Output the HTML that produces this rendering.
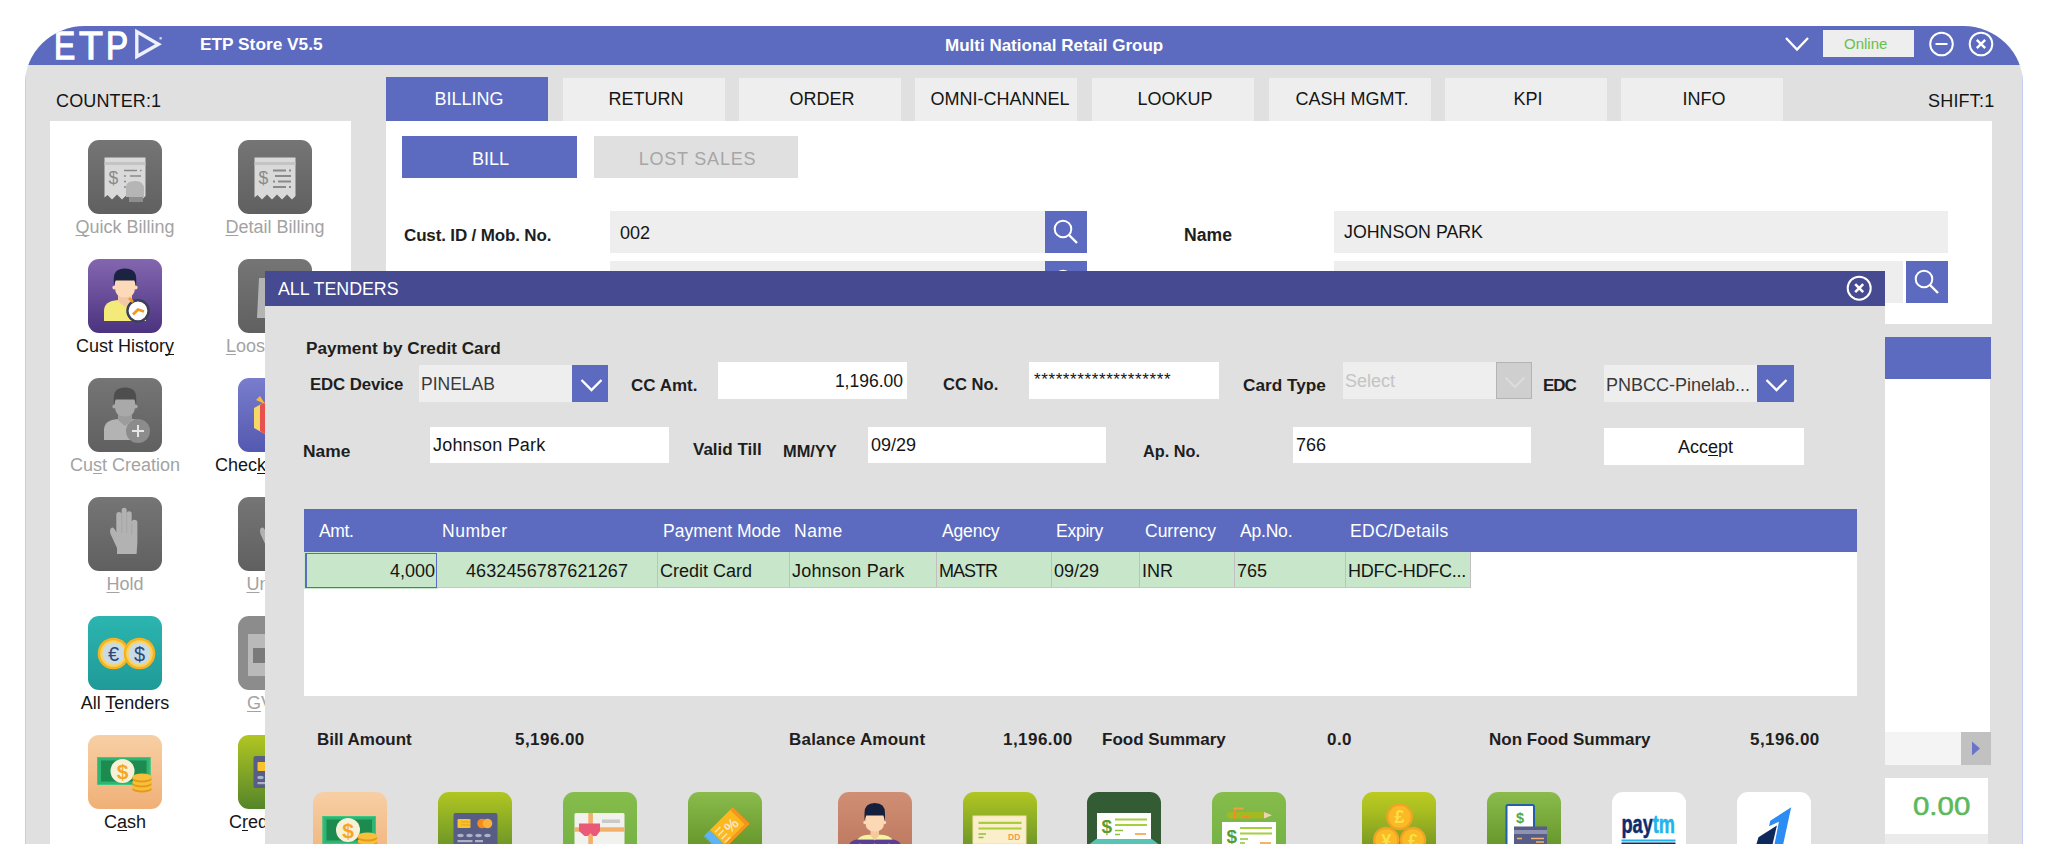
<!DOCTYPE html>
<html lang="en">
<head>
<meta charset="utf-8">
<title>ETP Store V5.5</title>
<style>
*{box-sizing:border-box;margin:0;padding:0}
html,body{width:2048px;height:844px;overflow:hidden;background:#fff}
body{font-family:"Liberation Sans",Arial,sans-serif;color:#151515;position:relative}
.abs{position:absolute}
#win{position:absolute;left:0;top:0;width:2048px;height:844px;background:#e0e0e0;clip-path:inset(26px 25px 0 25px round 60px 60px 0 0 / 58px 58px 0 0)}
#win>*{position:absolute}
#tbar{left:0;top:26px;width:2048px;height:39px;background:#5c6bc0}
.t{position:absolute;white-space:nowrap;line-height:1}
.b{font-weight:bold;color:#1e1e1e}
.tab{position:absolute;top:78px;height:43px;width:162px;background:#eeeeee;font-size:18px;text-align:center;line-height:43px;padding-left:4px}
.tab.act{background:#5c6bc0;color:#fff;top:77px;height:44px;line-height:45px}
.inp{position:absolute;background:#eeeeee;font-size:16px;line-height:1;white-space:nowrap}
.sbtn{position:absolute;background:#5c6bc0}
.ico{position:absolute;width:74px;height:74px;border-radius:11px;overflow:hidden}
.lbl{position:absolute;font-size:18px;line-height:1;white-space:nowrap;text-align:center;width:160px}
.lbl.dis{color:#a3a3a3}
u{text-decoration:underline;text-underline-offset:2px;text-decoration-skip-ink:none}
#dlg{left:265px;top:271px;width:1620px;height:600px;background:#e0e0e0;overflow:hidden}
#dlg>*{position:absolute}
.w{background:#fff}
.th{position:absolute;top:0;font-size:17.5px;color:#fff;line-height:44px;white-space:nowrap}
.td{position:absolute;top:43px;height:36px;background:#c8e6c9;border-right:1px solid #c3bec3;border-bottom:1px solid #c6c6c6;font-size:18px;line-height:38px;white-space:nowrap;padding-left:4px}
</style>
</head>
<body>
<div id="win">
  <div id="tbar"></div>
  <div class="abs" style="left:25px;top:26px;width:1px;height:818px;background:#c3cdf3"></div>
  <div class="abs" style="left:2022px;top:26px;width:1px;height:818px;background:#c3cdf3"></div>
  <svg class="abs" style="left:50px;top:24px" width="120" height="40" viewBox="0 0 120 40">
    <g font-family="Liberation Sans, Arial, sans-serif" font-size="39.5" fill="#fff" stroke="#fff" stroke-width="1.3">
      <text transform="translate(3.9,34.5) scale(0.805,1)">E</text>
      <text transform="translate(29.1,34.5) scale(0.99,1)">T</text>
      <text transform="translate(55.9,34.5) scale(0.84,1)">P</text>
    </g>
    <path d="M86.8 7.6 L108.5 20.2 L86.8 32.6 Z" fill="none" stroke="#eef0fb" stroke-width="3.4" stroke-linejoin="miter"/>
    <rect x="109.5" y="13.2" width="2.2" height="2.2" fill="#dfe3f6"/>
  </svg>
  <div class="t b" id="ttl1" style="left:200px;top:36px;font-size:17.3px;color:#fff">ETP Store V5.5</div>
  <div class="t b" id="ttl2" style="left:945px;top:37px;font-size:17px;color:#fff">Multi National Retail Group</div>
  <svg class="abs" style="left:1780px;top:30px" width="34" height="28" viewBox="0 0 34 28"><path d="M6 8 L17 19.5 L28 8" fill="none" stroke="#fff" stroke-width="2.4"/></svg>
  <div class="abs" style="left:1823px;top:30px;width:91px;height:27px;background:#eeeeee"></div>
  <div class="t" id="onl" style="left:1844px;top:36px;font-size:15px;color:#6bbf4b">Online</div>
  <svg class="abs" style="left:1926px;top:29px" width="72" height="30" viewBox="0 0 72 30">
    <circle cx="15.5" cy="15" r="11.3" fill="none" stroke="#fff" stroke-width="2"/>
    <path d="M9.5 15 H21.5" stroke="#fff" stroke-width="2"/>
    <circle cx="55" cy="15" r="11.3" fill="none" stroke="#fff" stroke-width="2"/>
    <path d="M50.8 10.8 L59.2 19.2 M59.2 10.8 L50.8 19.2" stroke="#fff" stroke-width="2.4"/>
  </svg>
  <div class="t" id="cnt" style="left:56px;top:91.5px;font-size:18px;letter-spacing:0.13px">COUNTER:1</div>
  <div class="t" id="shf" style="left:1928px;top:91.5px;font-size:18px;letter-spacing:0.2px">SHIFT:1</div>
  <div class="tab act" style="left:386px">BILLING</div>
  <div class="tab" style="left:563px">RETURN</div>
  <div class="tab" style="left:739px">ORDER</div>
  <div class="tab" style="left:915px;padding-left:8px">OMNI-CHANNEL</div>
  <div class="tab" style="left:1092px">LOOKUP</div>
  <div class="tab" style="left:1269px">CASH MGMT.</div>
  <div class="tab" style="left:1445px">KPI</div>
  <div class="tab" style="left:1621px">INFO</div>
  <!-- main panel -->
  <div class="abs w" style="left:386px;top:121px;width:1606px;height:203px"></div>
  <div class="abs" style="left:402px;top:136px;width:175px;height:42px;background:#5c6bc0;color:#fff;font-size:18px;text-align:center;line-height:46px;padding-left:2px">BILL</div>
  <div class="abs" style="left:594px;top:136px;width:204px;height:42px;background:#e0e0e0;color:#a6a6a6;font-size:18px;text-align:center;line-height:46px;letter-spacing:0.8px;padding-left:3px">LOST SALES</div>
  <div class="t b" style="left:404px;top:227px;font-size:17px;letter-spacing:-0.15px">Cust. ID / Mob. No.</div>
  <div class="inp" style="left:610px;top:211px;width:435px;height:42px;padding:13px 0 0 10px;font-size:18px">002</div>
  <div class="sbtn" style="left:1045px;top:211px;width:42px;height:42px"><svg width="42" height="42" viewBox="0 0 42 42"><circle cx="18" cy="18" r="8.300" fill="none" stroke="#fff" stroke-width="2"/><path d="M24 24 L32 32" stroke="#fff" stroke-width="2.400"/></svg></div>
  <div class="inp" style="left:610px;top:261px;width:435px;height:42px"></div>
  <div class="sbtn" style="left:1045px;top:261px;width:42px;height:42px"><svg width="42" height="42" viewBox="0 0 42 42"><circle cx="18" cy="18" r="8.300" fill="none" stroke="#fff" stroke-width="2"/><path d="M24 24 L32 32" stroke="#fff" stroke-width="2.400"/></svg></div>
  <div class="t b" style="left:1184px;top:227px;font-size:17.6px">Name</div>
  <div class="inp" style="left:1334px;top:211px;width:614px;height:42px;padding:13px 0 0 10px;font-size:17.8px">JOHNSON PARK</div>
  <div class="inp" style="left:1334px;top:261px;width:569px;height:42px"></div>
  <div class="sbtn" style="left:1906px;top:261px;width:42px;height:42px"><svg width="42" height="42" viewBox="0 0 42 42"><circle cx="18" cy="18" r="8.300" fill="none" stroke="#fff" stroke-width="2"/><path d="M24 24 L32 32" stroke="#fff" stroke-width="2.400"/></svg></div>
  <!-- right column -->
  <div class="abs" style="left:1885px;top:337px;width:106px;height:42px;background:#5c6bc0"></div>
  <div class="abs w" style="left:1885px;top:379px;width:105px;height:353px"></div>
  <div class="abs" style="left:1885px;top:732px;width:76px;height:33px;background:#f4f4f4"></div>
  <div class="abs" style="left:1961px;top:732px;width:30px;height:33px;background:#c1c1c1"></div>
  <svg class="abs" style="left:1961px;top:732px" width="30" height="33"><path d="M11 9.5 L19 16.5 L11 23.5 Z" fill="#6a74c9"/></svg>
  <div class="abs w" style="left:1885px;top:778px;width:103px;height:56px"></div>
  <div class="t" id="zero" style="left:1912.5px;top:792.7px;font-size:26.5px;color:#5cb85c;-webkit-text-stroke:0.55px #5cb85c;transform:scaleX(1.11);transform-origin:0 0">0.00</div>
  <div class="abs" style="left:1885px;top:834px;width:103px;height:20px;background:#ebebeb"></div>
  <!-- sidebar -->
  <svg width="0" height="0" style="position:absolute">
    <defs>
      <linearGradient id="gGray" x1="0" y1="0" x2="0" y2="1"><stop offset="0" stop-color="#757575"/><stop offset="1" stop-color="#606060"/></linearGradient>
      <linearGradient id="gPurple" x1="0" y1="0" x2="0" y2="1"><stop offset="0" stop-color="#8466b0"/><stop offset="1" stop-color="#4b337f"/></linearGradient>
      <linearGradient id="gTeal" x1="0" y1="0" x2="0" y2="1"><stop offset="0" stop-color="#2cb5b0"/><stop offset="1" stop-color="#1f9a98"/></linearGradient>
      <linearGradient id="gPeach" x1="0" y1="0" x2="0" y2="1"><stop offset="0" stop-color="#f7cfa4"/><stop offset="1" stop-color="#f0b077"/></linearGradient>
      <linearGradient id="gOlive" x1="0" y1="0" x2="0" y2="1"><stop offset="0" stop-color="#b1c621"/><stop offset="1" stop-color="#55852a"/></linearGradient>
      <linearGradient id="gGreen" x1="0" y1="0" x2="0" y2="1"><stop offset="0" stop-color="#86bd4c"/><stop offset="1" stop-color="#6fae42"/></linearGradient>
      <linearGradient id="gGreen2" x1="0" y1="0" x2="0" y2="1"><stop offset="0" stop-color="#8abb4c"/><stop offset="1" stop-color="#5a8a20"/></linearGradient>
      <linearGradient id="gBrown" x1="0" y1="0" x2="0" y2="1"><stop offset="0" stop-color="#d08f74"/><stop offset="1" stop-color="#b8735a"/></linearGradient>
      <linearGradient id="gBlueP" x1="0" y1="0" x2="0" y2="1"><stop offset="0" stop-color="#7a7dcc"/><stop offset="1" stop-color="#5459b0"/></linearGradient>
      <linearGradient id="gYel" x1="0" y1="0" x2="0" y2="1"><stop offset="0" stop-color="#bccb20"/><stop offset="0.250" stop-color="#a9be20"/><stop offset="0.700" stop-color="#7c9c22"/><stop offset="1" stop-color="#6a8f22"/></linearGradient>
      <g id="receipt">
        <path d="M16.5 17.5 H57.5 V56 L54 59.5 L49 54.5 L44 59.5 L39 54.5 L34 59.5 L29 54.5 L24 59.5 L19.5 55 L16.5 57.5 Z" fill="#d9d9d9"/>
        <rect x="16.5" y="22" width="41" height="3" fill="#c4c4c4"/>
      </g>
      <g id="cashnote">
        <rect x="9" y="22" width="53.500" height="28" fill="#2fb573"/>
        <rect x="13" y="25.500" width="45.500" height="21" fill="#1d8a50"/>
        <rect x="9.500" y="22.500" width="52.500" height="27" fill="none" stroke="#3cc783" stroke-width="1"/>
        <circle cx="34.500" cy="36" r="12" fill="#f7f1d8"/>
        <text x="34.500" y="43.500" text-anchor="middle" font-family="Liberation Sans, Arial, sans-serif" font-weight="bold" font-size="21" fill="#f5a623">$</text>
        <ellipse cx="54" cy="54" rx="9.800" ry="3.600" fill="#e69a1c"/><ellipse cx="54" cy="52" rx="9.800" ry="3.600" fill="#f8bf3a"/>
        <ellipse cx="54" cy="49" rx="9.800" ry="3.600" fill="#e69a1c"/><ellipse cx="54" cy="47" rx="9.800" ry="3.600" fill="#f8bf3a"/>
        <ellipse cx="54" cy="44" rx="9.800" ry="3.600" fill="#e69a1c"/><ellipse cx="54" cy="42" rx="9.800" ry="3.600" fill="#f8bf3a"/>
      </g>
    </defs>
  </svg>
  <div class="abs w" style="left:50px;top:121px;width:301px;height:730px"></div>
  <!-- row 1 -->
  <svg class="ico" style="left:88px;top:140px" viewBox="0 0 74 74"><rect width="74" height="74" fill="url(#gGray)"/><use href="#receipt"/>
    <text x="20.5" y="43.5" font-family="Liberation Sans, Arial, sans-serif" font-size="17.5" fill="#8a8a8a">$</text>
    <path d="M36 30.5 H49 M52 30.5 H53.5 M36 36 H38 M42 36 H53 M36 41.5 H38 M36 47 H38" stroke="#8a8a8a" stroke-width="1.6"/>
    <path d="M38 57 V47 Q38 41 47 41 Q56 41 56 49 V57 Z" fill="#b5b5b5"/><rect x="41" y="57" width="14" height="5" fill="#8e8e8e"/>
  </svg>
  <svg class="ico" style="left:238px;top:140px" viewBox="0 0 74 74"><rect width="74" height="74" fill="url(#gGray)"/><use href="#receipt"/>
    <text x="20.5" y="43.5" font-family="Liberation Sans, Arial, sans-serif" font-size="17.5" fill="#8a8a8a">$</text>
    <path d="M35 30.5 H48 M51 30.5 H53 M37 36 H53 M35 41.5 H37 M40 41.5 H53 M35 47 H48 M51 47 H53" stroke="#8a8a8a" stroke-width="1.8"/>
  </svg>
  <div class="lbl dis" style="left:45px;top:218px"><u>Q</u>uick Billing</div>
  <div class="lbl dis" style="left:195px;top:218px"><u>D</u>etail Billing</div>
  <!-- row 2 -->
  <svg class="ico" style="left:88px;top:259px" viewBox="0 0 74 74"><rect width="74" height="74" fill="url(#gPurple)"/>
    <path d="M16 62 V52 Q16 42 30 41 H44 Q58 42 58 52 V62 Z" fill="#f3ea7a"/>
    <path d="M30 34 H44 V42 L37 48 L30 42 Z" fill="#f3c9a5"/>
    <path d="M27 20 H47 V29 Q47 38.500 37 38.500 Q27 38.500 27 29 Z" fill="#fbd9b9"/>
    <circle cx="26.300" cy="28.500" r="1.900" fill="#fbd9b9"/><circle cx="47.700" cy="28.500" r="1.900" fill="#fbd9b9"/>
    <path d="M25.800 26.500 V19.500 Q25.800 9.500 37 9.500 Q48.200 9.500 48.200 19.500 V26.500 L46.300 21.500 H27.700 Z" fill="#1a2340"/>
    <circle cx="50" cy="51.800" r="10.600" fill="#fff" stroke="#3a4058" stroke-width="2.400"/>
    <path d="M45 55.500 L50 50.500 L56 52.500" fill="none" stroke="#f39a1e" stroke-width="2.800"/>
    <path d="M41 39 L45 43" stroke="#f39a1e" stroke-width="2.500"/>
  </svg>
  <svg class="ico" style="left:238px;top:259px" viewBox="0 0 74 74"><rect width="74" height="74" fill="url(#gGray)"/><path d="M21 19 H30 V59 H19 Z" fill="#b4b4b4"/></svg>
  <div class="lbl" style="left:45px;top:337px">Cust Histor<u>y</u></div>
  <div class="lbl dis" style="left:195px;top:337px"><u>L</u>oose Items</div>
  <!-- row 3 -->
  <svg class="ico" style="left:88px;top:378px" viewBox="0 0 74 74"><rect width="74" height="74" fill="url(#gGray)"/>
    <path d="M16 62 V52 Q16 42 30 41 H44 Q58 42 58 52 V62 Z" fill="#b3b3b3"/>
    <path d="M30 34 H44 V42 L37 48 L30 42 Z" fill="#9c9c9c"/>
    <path d="M27 20 H47 V29 Q47 38.500 37 38.500 Q27 38.500 27 29 Z" fill="#a9a9a9"/>
    <circle cx="26.300" cy="28.500" r="1.900" fill="#a9a9a9"/><circle cx="47.700" cy="28.500" r="1.900" fill="#a9a9a9"/>
    <path d="M25.800 26.500 V19.500 Q25.800 9.500 37 9.500 Q48.200 9.500 48.200 19.500 V26.500 L46.300 21.500 H27.700 Z" fill="#4e4e4e"/>
    <circle cx="50" cy="53" r="12" fill="#8c8c8c"/>
    <path d="M50 47 V59 M44 53 H56" stroke="#e6e6e6" stroke-width="2"/>
  </svg>
  <svg class="ico" style="left:238px;top:378px" viewBox="0 0 74 74"><rect width="74" height="74" fill="url(#gBlueP)"/>
    <path d="M16 30 L27 24 V56 L16 50 Z" fill="#f5d76a"/><path d="M22 27 L27 24 V56 L22 53 Z" fill="#e8504e"/><path d="M18 22 L27 26 L22 18 Z" fill="#f5b942"/></svg>
  <div class="lbl dis" style="left:45px;top:456px">Cu<u>s</u>t Creation</div>
  <div class="lbl" style="left:215px;top:456px;text-align:left">Chec<u>k</u> Points</div>
  <!-- row 4 -->
  <svg class="ico" style="left:88px;top:497px" viewBox="0 0 74 74"><rect width="74" height="74" fill="url(#gGray)"/>
    <path d="M29 57 L29 51 L22.500 37 Q21 31.500 24 30.500 Q26 30 28.300 35.500 V17.500 Q28.300 14.900 31 14.900 Q33.700 14.900 33.700 17.500 V13.300 Q33.700 10.700 36.200 10.700 Q38.700 10.700 38.700 13.300 V16.800 Q38.700 14.200 41.200 14.200 Q43.700 14.200 43.700 16.800 V25.400 Q43.700 22.800 46.500 22.800 Q49.400 22.800 49.400 25.400 V45 L48.600 57 Z" fill="#b2b2b2"/><path d="M33.700 18 V36 M38.700 17 V36 M43.700 26 V38" stroke="#a2a2a2" stroke-width="0.700"/>
  </svg>
  <svg class="ico" style="left:238px;top:497px" viewBox="0 0 74 74"><rect width="74" height="74" fill="url(#gGray)"/><path d="M22.500 37 Q21 31.500 24 30.500 Q26 30 28.300 35.500 V57 H29 V51 Z" fill="#b2b2b2"/></svg>
  <div class="lbl dis" style="left:45px;top:575px"><u>H</u>old</div>
  <div class="lbl dis" style="left:195px;top:575px"><u>U</u>nhold</div>
  <!-- row 5 -->
  <svg class="ico" style="left:88px;top:616px" viewBox="0 0 74 74"><rect width="74" height="74" fill="url(#gTeal)"/>
    <circle cx="25.500" cy="37.500" r="15.800" fill="#f5b324"/><circle cx="25.500" cy="37.500" r="13.300" fill="#fbd35a"/><circle cx="25.500" cy="37.500" r="11" fill="#c9dbe6"/>
    <circle cx="51.500" cy="37.500" r="15.800" fill="#f5b324"/><circle cx="51.500" cy="37.500" r="13.300" fill="#fbd35a"/><circle cx="51.500" cy="37.500" r="11" fill="#c9dbe6"/>
    <text x="25.500" y="44.500" text-anchor="middle" font-family="Liberation Sans, Arial, sans-serif" font-size="20" fill="#2d4a78">€</text>
    <text x="51.500" y="44.500" text-anchor="middle" font-family="Liberation Sans, Arial, sans-serif" font-size="20" fill="#2d4a78">$</text>
  </svg>
  <svg class="ico" style="left:238px;top:616px" viewBox="0 0 74 74"><rect width="74" height="74" fill="#8c8c8c"/><path d="M10 18 H27 V60 H10 Z" fill="#b9b9b9"/><path d="M15 32 H27 V47 H15 Z" fill="#7a7a7a"/></svg>
  <div class="lbl" style="left:45px;top:694px">All <u>T</u>enders</div>
  <div class="lbl dis" style="left:247px;top:694px;text-align:left"><u>G</u>V Sale</div>
  <!-- row 6 -->
  <svg class="ico" style="left:88px;top:735px" viewBox="0 0 74 74"><rect width="74" height="74" fill="url(#gPeach)"/><use href="#cashnote"/></svg>
  <svg class="ico" style="left:238px;top:735px" viewBox="0 0 74 74"><rect width="74" height="74" fill="url(#gOlive)"/><rect x="15.500" y="21" width="44" height="32" rx="2" fill="#585d86"/><rect x="19.500" y="27" width="13" height="9" rx="1" fill="#f8c22d"/><g fill="#aeb2c8"><ellipse cx="22.500" cy="42.500" rx="3.200" ry="1.700"/><rect x="19.500" y="47" width="15" height="2.200"/></g></svg>
  <div class="lbl" style="left:45px;top:813px">C<u>a</u>sh</div>
  <div class="lbl" style="left:195px;top:813px">C<u>r</u>edit Card</div>
  <!-- dialog -->
  <div id="dlg">
    <div style="left:0;top:0;width:1620px;height:35px;background:#454a91"></div>
    <div class="t" id="dt" style="left:13px;top:9.8px;font-size:17.8px;color:#fff">ALL TENDERS</div>
    <svg style="left:1580px;top:4px" width="28" height="28" viewBox="0 0 28 28"><circle cx="14.200" cy="13.200" r="11.500" fill="none" stroke="#fff" stroke-width="2"/><path d="M10.200 9.200 L18.200 17.200 M18.200 9.200 L10.200 17.200" stroke="#fff" stroke-width="2.600"/></svg>
    <div class="t b" id="pcc" style="left:41px;top:69px;font-size:17.2px">Payment by Credit Card</div>
    <div class="t b" style="left:45px;top:106px;font-size:16.8px;letter-spacing:-0.1px">EDC Device</div>
    <div class="inp" style="left:154px;top:94px;width:153px;height:37px;padding:11px 0 0 2px;font-size:17.5px;color:#3a3a3a">PINELAB</div>
    <div class="sbtn" style="left:307px;top:94px;width:36px;height:37px"><svg width="36" height="37" viewBox="0 0 36 37"><path d="M9.500 15 L19.500 25 L29.500 15" fill="none" stroke="#fff" stroke-width="2.400"/></svg></div>
    <div class="t b" style="left:366px;top:106px;font-size:17px">CC Amt.</div>
    <div class="inp w" style="left:453px;top:91px;width:189px;height:37px;padding:11px 4px 0 0;font-size:17.5px;text-align:right">1,196.00</div>
    <div class="t b" style="left:678px;top:106px;font-size:16.6px">CC No.</div>
    <div class="inp w" style="left:764px;top:91px;width:190px;height:37px;padding:9px 0 0 5px;font-size:17px;letter-spacing:0.6px">*******************</div>
    <div class="t b" style="left:978px;top:106px;font-size:17.2px">Card Type</div>
    <div class="inp" style="left:1078px;top:91px;width:153px;height:37px;padding:10px 0 0 2px;font-size:18px;color:#c4c4c4">Select</div>
    <div style="left:1231px;top:91px;width:36px;height:37px;background:#cfcfcf;border:1px solid #b4b4b4"><svg width="34" height="35" viewBox="0 0 34 35"><path d="M8.500 14.500 L18 24 L27.500 14.500" fill="none" stroke="#dcdcdc" stroke-width="2"/></svg></div>
    <div class="t b" style="left:1278px;top:106px;font-size:17px;letter-spacing:-1px">EDC</div>
    <div class="inp" style="left:1339px;top:94px;width:153px;height:37px;padding:11px 0 0 2px;font-size:18px;color:#3a3a3a">PNBCC-Pinelab...</div>
    <div class="sbtn" style="left:1492px;top:94px;width:37px;height:37px"><svg width="36" height="37" viewBox="0 0 36 37"><path d="M9.500 15 L19.500 25 L29.500 15" fill="none" stroke="#fff" stroke-width="2.400"/></svg></div>
    <div class="t b" style="left:38px;top:172px;font-size:17.4px">Name</div>
    <div class="inp w" style="left:165px;top:156px;width:239px;height:36px;padding:9px 0 0 3px;font-size:18px;letter-spacing:0.2px">Johnson Park</div>
    <div class="t b" style="left:428px;top:170px;font-size:17px">Valid Till</div>
    <div class="t b" style="left:518px;top:172px;font-size:16.4px">MM/YY</div>
    <div class="inp w" style="left:603px;top:156px;width:238px;height:36px;padding:9px 0 0 3px;font-size:18px">09/29</div>
    <div class="t b" style="left:878px;top:172px;font-size:16.3px">Ap. No.</div>
    <div class="inp w" style="left:1028px;top:156px;width:238px;height:36px;padding:9px 0 0 3px;font-size:18px">766</div>
    <div class="w" style="left:1339px;top:157px;width:200px;height:37px;font-size:18px;text-align:center;line-height:39px;padding-left:3px">Acc<u>e</u>pt</div>
    <!-- table -->
    <div class="w" style="left:39px;top:238px;width:1553px;height:187px"></div>
    <div id="tbl" style="left:40px;top:238px;width:1552px;height:78px">
      <div style="position:absolute;left:-1px;top:0;width:1553px;height:43px;background:#5c6bc0"></div>
      <div class="th" style="left:14px;letter-spacing:-0.4px">Amt.</div>
      <div class="th" style="left:137px;letter-spacing:0.55px">Number</div>
      <div class="th" style="left:358px">Payment Mode</div>
      <div class="th" style="left:489px;letter-spacing:0.55px">Name</div>
      <div class="th" style="left:637px;letter-spacing:-0.15px">Agency</div>
      <div class="th" style="left:751px;letter-spacing:-0.25px">Expiry</div>
      <div class="th" style="left:840px">Currency</div>
      <div class="th" style="left:935px;letter-spacing:-0.2px">Ap.No.</div>
      <div class="th" style="left:1045px;letter-spacing:0.3px">EDC/Details</div>
      <div class="td" style="left:0;width:132px;outline:1px solid #c8e6c9;text-align:right;padding-right:1px;border:1px solid #5c6bc0;border-left-width:2px;line-height:35px;top:44px;height:35px;box-shadow:0 -1px 0 #c8e6c9">4,000</div>
      <div class="td" style="left:132px;width:221px;text-align:center;padding-left:0;letter-spacing:0.12px">4632456787621267</div>
      <div class="td" style="left:353px;width:132px;padding-left:2px">Credit Card</div>
      <div class="td" style="left:485px;width:147px;padding-left:2px;letter-spacing:0.2px">Johnson Park</div>
      <div class="td" style="left:632px;width:115px;padding-left:2px;letter-spacing:-1px">MASTR</div>
      <div class="td" style="left:747px;width:88px;padding-left:2px">09/29</div>
      <div class="td" style="left:835px;width:95px;padding-left:2px">INR</div>
      <div class="td" style="left:930px;width:111px;padding-left:2px">765</div>
      <div class="td" style="left:1041px;width:125px;padding-left:2px;letter-spacing:-0.25px">HDFC-HDFC...</div>
    </div>
    <!-- summary -->
    <div class="t b" style="left:52px;top:460px;font-size:17px">Bill Amount</div>
    <div class="t b" style="left:250px;top:460px;font-size:17px;letter-spacing:0.45px">5,196.00</div>
    <div class="t b" style="left:524px;top:460px;font-size:17px;letter-spacing:0.2px">Balance Amount</div>
    <div class="t b" style="left:738px;top:460px;font-size:17px;letter-spacing:0.45px">1,196.00</div>
    <div class="t b" style="left:837px;top:460px;font-size:17px">Food Summary</div>
    <div class="t b" style="left:1062px;top:460px;font-size:17px;letter-spacing:0.45px">0.0</div>
    <div class="t b" style="left:1224px;top:460px;font-size:17px">Non Food Summary</div>
    <div class="t b" style="left:1485px;top:460px;font-size:17px;letter-spacing:0.45px">5,196.00</div>
    <!-- tender icons -->
    <svg class="ico" style="left:48px;top:521px" viewBox="0 0 74 74"><rect width="74" height="74" fill="url(#gPeach)"/><use href="#cashnote" transform="translate(0.5,2)"/></svg>
    <svg class="ico" style="left:173px;top:521px" viewBox="0 0 74 74"><rect width="74" height="74" fill="url(#gOlive)"/><rect x="15.500" y="21" width="44" height="36" rx="2" fill="#585d86"/><rect x="19.500" y="27" width="13" height="9" rx="1" fill="#f8c22d"/><path d="M23 30 H32 M23 33 H32" stroke="#e9a21c" stroke-width="1"/><circle cx="44" cy="31.500" r="4.800" fill="#f58a1f"/><circle cx="49.500" cy="31.500" r="4.800" fill="#f8b13a"/><g fill="#aeb2c8"><ellipse cx="22.500" cy="43.500" rx="3.200" ry="1.700"/><ellipse cx="31.500" cy="43.500" rx="3.200" ry="1.700"/><ellipse cx="40.500" cy="43.500" rx="3.200" ry="1.700"/><ellipse cx="49.500" cy="43.500" rx="3.200" ry="1.700"/><rect x="19.500" y="48" width="15" height="2.200"/><rect x="37" y="48" width="8" height="2.200"/></g></svg>
    <svg class="ico" style="left:298px;top:521px" viewBox="0 0 74 74"><rect width="74" height="74" fill="url(#gGreen)"/><rect x="11.500" y="21" width="50" height="40" rx="1.500" fill="#f1f1ee"/><rect x="25.300" y="21" width="4.600" height="40" fill="#f2b06a"/><rect x="11.500" y="35.300" width="50" height="4.400" fill="#f2b06a"/><path d="M16 31.500 H37 V39 L33.500 44 H30 L27.500 41 L25 44 H21.500 L16 39 Z" fill="#ea5a78"/><rect x="39" y="27.500" width="18" height="3.500" fill="#c9c9c9"/></svg>
    <svg class="ico" style="left:423px;top:521px" viewBox="0 0 74 74"><rect width="74" height="74" fill="url(#gGreen2)"/><g transform="translate(44.2,15.7) rotate(-45)"><path d="M-31.500 0 H-39 L-41 1.47 L-39 2.94 L-41 4.41 L-39 5.88 L-41 7.34 L-39 8.81 L-41 10.28 L-39 11.75 L-41 13.22 L-39 14.69 L-41 16.16 L-39 17.62 L-41 19.09 L-39 20.56 L-41 22.03 L-39 23.50 H-31.500 Z" fill="#5eb3f6"/><rect x="-31.500" y="0" width="31.500" height="23.500" fill="#fbb81f"/><rect x="-31.500" y="20.500" width="31.500" height="3" fill="#f7941d"/><path d="M-3 0 H0 L1.600 1.500 L0 2.940 L1.600 4.400 L0 5.880 L1.600 7.340 L0 8.810 L1.600 10.280 L0 11.750 L1.600 13.220 L0 14.690 L1.600 16.160 L0 17.630 L1.600 19.090 L0 20.560 L1.600 22 L0 23.500 H-3 Z" fill="#f7941d"/><text x="-13.100" y="17" text-anchor="middle" font-family="Liberation Sans, Arial, sans-serif" font-size="15" font-weight="bold" fill="#fde6c4">%</text><path d="M-29.500 5.200 H-22 M-29.500 9.800 H-22 M-29.500 14.600 H-22 M-29.500 19.400 H-22" stroke="#fde0a8" stroke-width="1.600"/></g></svg>
    <svg class="ico" style="left:573px;top:521px" viewBox="0 0 74 74"><rect width="74" height="74" fill="url(#gBrown)"/><path d="M10 74 V56 Q11 48.500 19 47.500 H55 Q63 48.500 64 56 V74 Z" fill="#5b3f92"/><path d="M19.500 47.500 Q22 43.500 30 42.800 H43.500 Q51.500 43.500 54.500 47.500 Z" fill="#f3f3a0"/><rect x="32.500" y="37" width="8.500" height="7" fill="#f5c89e"/><path d="M32.500 43.500 H41 L36.750 48.500 Z" fill="#f5c89e"/><path d="M27.500 22 H46 V31 Q46 39.500 36.750 39.500 Q27.500 39.500 27.500 31 Z" fill="#fcd9b4"/><circle cx="27" cy="30.500" r="1.700" fill="#fcd9b4"/><circle cx="46.500" cy="30.500" r="1.700" fill="#fcd9b4"/><path d="M26.500 28.500 V21 Q26.500 11 36.750 11 Q47 11 47 21 V28.500 L45.300 23.500 H28.200 Z" fill="#14203c"/><path d="M22 51 l1 2 h-2 Z M36.750 51 l1 2 h-2 Z M51 51 l1 2 h-2 Z" fill="#f5d94a"/></svg>
    <svg class="ico" style="left:698px;top:521px" viewBox="0 0 74 74"><rect width="74" height="74" fill="url(#gOlive)"/><rect x="10" y="24" width="53" height="28" fill="#fbeecb"/><rect x="10" y="24" width="53" height="28" fill="none" stroke="#f3dfae" stroke-width="1"/><path d="M15.500 30.800 H58.500 M15.500 36.500 H58.500" stroke="#a6cf3c" stroke-width="2.200"/><path d="M15.500 42 H23 M15.500 45.500 H20.500" stroke="#8ec23a" stroke-width="1.600"/><text x="45" y="47.500" font-family="Liberation Sans, Arial, sans-serif" font-size="8.500" font-weight="bold" fill="#f29a4a">DD</text></svg>
    <svg class="ico" style="left:822px;top:521px" viewBox="0 0 74 74"><rect width="74" height="74" fill="#335c35"/><circle cx="37" cy="91.300" r="52.200" fill="#58c4b6"/><rect x="10" y="21" width="54" height="26" fill="#fff"/><text x="14.500" y="41" font-family="Liberation Sans, Arial, sans-serif" font-size="19" font-weight="bold" fill="#5b9e2e">$</text><path d="M28 27.500 H60 M28 33 H60" stroke="#a6cf3c" stroke-width="2"/><path d="M28 38.500 H36 M28 42.500 H33" stroke="#8ec23a" stroke-width="1.600"/><path d="M48 42 H59" stroke="#f5b36a" stroke-width="2"/></svg>
    <svg class="ico" style="left:947px;top:521px" viewBox="0 0 74 74"><rect width="74" height="74" fill="url(#gGreen)"/><rect x="15" y="20" width="38" height="6.500" rx="3.200" fill="#a4ba22"/><path d="M52 20 L60 23.200 L52 26.500 Z" fill="#f4d2b0"/><rect x="21.500" y="16" width="2.600" height="11" fill="#f28b2a"/><rect x="21.500" y="15.500" width="10" height="2" fill="#f2a03a"/><rect x="30" y="24" width="7" height="2" fill="#f28b2a"/><rect x="10" y="30" width="54" height="30" fill="#fff"/><text x="14.500" y="50.500" font-family="Liberation Sans, Arial, sans-serif" font-size="19" font-weight="bold" fill="#5b9e2e">$</text><path d="M28 36 H60 M28 41.500 H60" stroke="#a6cf3c" stroke-width="2"/><path d="M28 47 H36 M28 51 H33" stroke="#8ec23a" stroke-width="1.600"/><path d="M48 51 H59" stroke="#f5b36a" stroke-width="2"/></svg>
    <svg class="ico" style="left:1097px;top:521px" viewBox="0 0 74 74"><rect width="74" height="74" fill="url(#gYel)"/><g><circle cx="24.200" cy="48" r="13.200" fill="#f0a426"/><circle cx="24.200" cy="48" r="10.800" fill="#fbb926"/><circle cx="51" cy="48" r="13.200" fill="#f0a426"/><circle cx="51" cy="48" r="10.800" fill="#fbb926"/><circle cx="37.600" cy="24.700" r="13.400" fill="#f0a426"/><circle cx="37.600" cy="24.700" r="11" fill="#fbb926"/><text x="37.600" y="31.200" text-anchor="middle" font-family="Liberation Sans, Arial, sans-serif" font-size="18" font-weight="bold" fill="#fbe04a">£</text><text x="24.200" y="54.500" text-anchor="middle" font-family="Liberation Sans, Arial, sans-serif" font-size="18" font-weight="bold" fill="#fbe04a">¥</text><text x="51" y="54.500" text-anchor="middle" font-family="Liberation Sans, Arial, sans-serif" font-size="18" font-weight="bold" fill="#fbe04a">£</text></g></svg>
    <svg class="ico" style="left:1222px;top:521px" viewBox="0 0 74 74"><rect width="74" height="74" fill="url(#gGreen2)"/><rect x="19.500" y="13" width="27.500" height="52" rx="1.500" fill="#fff" stroke="#1f5fae" stroke-width="2"/><text x="33" y="30.500" text-anchor="middle" font-family="Liberation Sans, Arial, sans-serif" font-size="14.500" font-weight="bold" fill="#55a838">$</text><rect x="27" y="34.500" width="33" height="24" fill="#585d86"/><rect x="27" y="38" width="33" height="4" fill="#8e93b3"/><path d="M30 46.500 H35 M44 46.500 H57 M49 50 H57" stroke="#f2b26a" stroke-width="1.500"/></svg>
    <svg class="ico" style="left:1347px;top:521px" viewBox="0 0 74 74"><rect width="74" height="74" fill="#fff"/><text x="9.500" y="40.500" font-family="Liberation Sans, Arial, sans-serif" font-size="25" font-weight="bold" fill="#0f2b6b" textLength="53.500" lengthAdjust="spacingAndGlyphs" stroke="#0f2b6b" stroke-width="0.500">pay<tspan fill="#20b4ec" stroke="#20b4ec">tm</tspan></text><rect x="9.500" y="47.500" width="54" height="2" fill="#20b4ec"/><rect x="9.500" y="50.500" width="54" height="10" fill="#0f2b6b"/></svg>
    <svg class="ico" style="left:1472px;top:521px" viewBox="0 0 74 74"><rect width="74" height="74" fill="#fff"/><path d="M54.200 15.300 L33.300 28.700 L32 34.200 L41.900 29.800 L36 60 L44.500 60 Z" fill="#2b8cf4"/><path d="M39.900 33.500 L21.500 45.300 L17 60 L33.800 60 Z" fill="#0e2a5c"/></svg>
  </div>
</div>
</body>
</html>
